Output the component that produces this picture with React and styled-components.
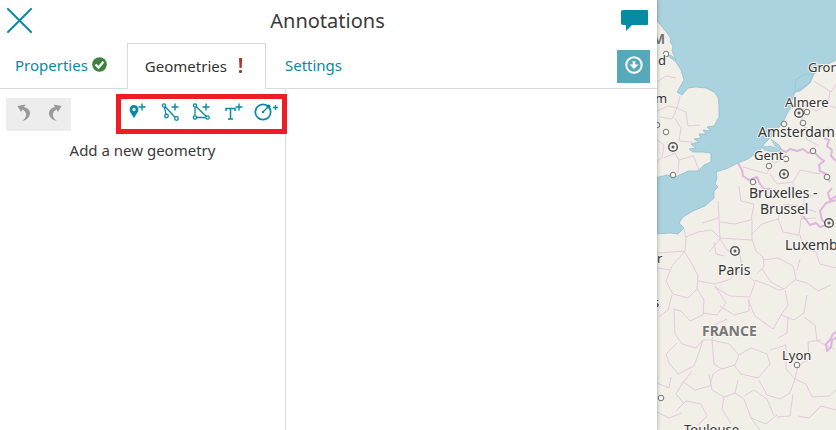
import React from "react";
import styled, { createGlobalStyle } from "styled-components";

const teal = "#078aa3";
const line = "#d9dadb";

const Global = createGlobalStyle`
  * { box-sizing: border-box; }
  body { margin: 0; background: #fff; color: #3a3a3a; font: 15px/24px "Noto Sans", sans-serif; overflow: hidden; }
  button { font: inherit; color: inherit; border: 0; padding: 0; margin: 0; background: transparent; cursor: pointer; }
  svg { display: block; }
`;
const Page = styled.div`
  display: flex;
  height: 100vh;
`;
const Panel = styled.main`
  display: flex;
  flex-direction: column;
  flex: none;
  width: 657px;
  max-width: 80%;
  background: #fff;
  box-shadow: 0 0 4px rgba(0, 0, 0, 0.35);
  z-index: 1;
`;
const Header = styled.header`
  display: grid;
  grid-template-columns: 36px 1fr 36px;
  align-items: center;
  height: 43px;
  padding: 0 4px 2px 2px;
`;
const HeaderButton = styled.button`
  display: grid;
  place-items: center;
  height: 40px;
`;
const Title = styled.h1`
  margin: 0;
  font-size: 20px;
  line-height: 28px;
  font-weight: 400;
  text-align: center;
`;
const TabBar = styled.div`
  display: flex;
  height: 46px;
`;
const Tab = styled.button`
  display: flex;
  align-items: center;
  gap: ${(p) => (p.$active ? 6 : 4)}px;
  padding: 0 19px 2px;
  color: ${(p) => (p.$active ? "#333" : teal)};
  border: solid ${line};
  border-width: ${(p) => (p.$active ? "1px 1px 0" : "0 0 1px")};
  ${(p) => p.$active && "padding: 0 17px 1px;"}
  ${(p) => p.$first && "padding-left: 15px; padding-right: 20px;"}
`;
const TabActions = styled.div`
  flex: 1;
  display: flex;
  justify-content: flex-end;
  padding: 7px 7px 0 0;
  border-bottom: 1px solid ${line};
`;
const DownloadButton = styled.button`
  display: grid;
  place-items: center;
  width: 33px;
  height: 33px;
  padding-bottom: 4px;
  background: #56a9ba;
`;
const Body = styled.div`
  display: flex;
  flex: 1;
`;
const GeometryList = styled.section`
  width: 286px;
  border-right: 1px solid ${line};
`;
const Toolbar = styled.div`
  display: flex;
  justify-content: space-between;
  align-items: flex-start;
  padding: 5px 0 0 6px;
  margin-right: -2px;
`;
const History = styled.div`
  display: flex;
  width: 65px;
  height: 33px;
  padding: 0 0 4px 2px;
  margin-top: 4px;
  background: #ededed;
`;
const ToolButton = styled.button`
  display: grid;
  place-items: center;
  flex: 1;
`;
const Tools = styled.div`
  display: flex;
  width: 171px;
  height: 40px;
  padding: 0 0 4px 2px;
  border: 5px solid #ee1c25;
  background: #fff;
  z-index: 1;
`;
const Hint = styled.p`
  margin: 4px 0 0;
  text-align: center;
`;
const MapArea = styled.aside`
  flex: 1;
  min-width: 0;
  overflow: hidden;
  background: #aad3df;
`;
const MapSvg = styled.svg`
  width: 100%;
  height: 100%;
`;
const Label = styled.text`
  font-family: "Noto Sans", sans-serif;
  font-size: ${(p) => p.$size || 14}px;
  font-weight: ${(p) => (p.$bold ? 700 : 400)};
  fill: ${(p) => (p.$bold ? "#777" : "#333")};
  stroke: #f8f6f2;
  stroke-width: 2px;
  stroke-linejoin: round;
  paint-order: stroke;
`;

const Stroke = ({ children, size = 20, w = 1.3, ...rest }) => (
  <svg width={size} height={size} viewBox={`0 0 ${size} ${size}`} fill="none" stroke={teal} strokeWidth={w} {...rest}>
    {children}
  </svg>
);
const Plus = ({ x = 14, y = 5, r = 3.5 }) => (
  <path strokeWidth="1.4" d={`M${x - r} ${y}H${x + r}M${x} ${y - r}V${y + r}`} />
);

const tools = [
  ["Add marker", <Stroke key="m"><path fill={teal} stroke="none" fillRule="evenodd" d="M5 3a4.4 4.4 0 0 0-4.400 4.400C.6 10.500 3.500 12.500 5 16.500C6.500 12.500 9.400 10.500 9.400 7.400A4.400 4.400 0 0 0 5 3ZM5 5.800a1.600 1.600 0 1 1 0 3.200A1.600 1.600 0 0 1 5 5.800Z" /><Plus x={13} /></Stroke>],
  ["Add line", <Stroke key="l" w={1.3}><circle cx="3" cy="3.500" r="1.600" /><circle cx="5.500" cy="14" r="1.800" /><circle cx="15.500" cy="16.500" r="1.800" /><path d="M3.400 5.200 5 12.200M4.300 4.700 14 15.200" /><Plus x={14} /></Stroke>],
  ["Add polygon", <Stroke key="p" w={1.3}><circle cx="3" cy="3.500" r="1.600" /><circle cx="3" cy="15.500" r="1.700" /><circle cx="15.500" cy="15.500" r="1.700" /><path d="M3 5.200V13.700M4.300 4.700 14.200 14.300M4.800 15.500H13.800" /><Plus x={14} /></Stroke>],
  ["Add text", <Stroke key="t"><path d="M2 9V6.500H11V9M6.500 6.500V17M4 17H9" strokeWidth="1.500" /><Plus x={15} /></Stroke>],
  ["Add circle", <Stroke key="c" size={26}><circle cx="10" cy="13" r="7.700" strokeWidth="1.700" /><circle cx="10" cy="13" r="1.200" fill={teal} stroke="none" /><path d="M10 13 15 8" /><circle cx="15.500" cy="7.500" r="2.100" fill={teal} stroke="none" /><Plus x={22.5} y={8.500} r={2.5} /></Stroke>],
];

const Turn = ({ flip }) => (
  <svg width="20" height="22" viewBox="0 0 20 22">
    <path transform={flip ? "translate(20 0) scale(-1 1)" : undefined} fill="#999" d="M3.500 4 11.500 2.500 10 5C16 6.500 18 11.500 14 16Q12 18.500 8 19C14 15 13 10 8.500 7.500L7 10Z" />
  </svg>
);

const dots = [[666, 54], [657, 125], [666, 132], [673, 175], [807, 112], [784, 124], [803, 123], [813, 151], [786, 159], [769, 166], [753, 182], [827, 177], [797, 365], [661, 398]];
const capitals = [[673, 147], [799, 113], [784, 174], [735, 251], [829, 223]];
const labels = [
  [652, 44, "M", 14, true], [658, 65, "d", 13], [655, 103, "m", 13],
  [808, 72, "Groningen", 13], [785, 107, "Almere", 13], [758, 137, "Amsterdam", 14],
  [754, 160, "Gent", 13], [749, 198, "Bruxelles -", 14], [760, 214, "Brussel", 14],
  [785, 250, "Luxembourg", 14], [718, 275, "Paris", 14], [702, 336, "FRANCE", 14, true],
  [782, 360, "Lyon", 13], [684, 434, "Toulouse", 13], [657, 263, "r", 13], [653, 307, "s", 13],
];

const EuropeMap = () => (
  <MapSvg viewBox="657 0 179 430" preserveAspectRatio="xMinYMin slice" role="img" aria-label="Map">
    <rect x="657" width="179" height="430" fill="#aad3df" />
    <g fill="#f2efe9" stroke="#8fbfce" strokeWidth="0.800">
      <path d="M655 20 659 23 663 28 668 34 671 39 670 42 673 46 672 51 676 60 672 56 667 55 676 62 681 70 684 80 680 87 677 92 682 95 688 88 696 87 706 88 714 92 718 97 719 106 719 117 714 126 707 127 711 131 703 130 706 134 699 134 701 138 694 139 699 142 691 144 696 148 689 149 693 152 703 152 711 153 711 162 704 165 700 169 697 171 688 171 682 174 675 177 667 175 655 178Z" />
      <path d="M840 58 824 66 814 74 810 83 800 91 795 92 792 100 791 107 788 112 783 122 777 130 771 137 765 143 760 150 748 159 738 163 728 168 716 172 717 178 715 184 718 187 714 191 714 198 705 206 693 211 683 217 679 223 684 228 680 232 678 234 670 233 655 234V435H840Z" />
    </g>
    <path fill="#aad3df" stroke="#8fbfce" strokeWidth="0.600" d="M810 82 802 88 795 91 796 80 803 75 813 74Z M762 147 770 146 776 148 780 151 773 152 764 150Z M771 139 779 145 782 150 775 146Z" />
    <g fill="none" stroke="#e3cbdc" strokeWidth="1" strokeLinejoin="round">
      <path d="M657 82 666 76 676 78 M657 111 668 106 677 108 680 96 M677 108 686 112 688 126 700 125 M677 108 672 119 660 117 M675 118 681 128 679 141 692 142 M657 140 664 145 662 158 657 161 M664 158 675 153 679 160 693 156 M679 160 678 173 M693 155 699 170" />
      <path d="M718 201 719 218 702 223 M719 218 720 239 709 252 M684 229 686 238 685 251 657 253 M686 237 698 232 712 230 719 237 M720 222 734 224 751 220 754 204 741 201 739 186 M752 219 752 240 719 238 M685 251 672 266 666 281 673 294 688 298 697 289 698 276 692 264 684 251 M698 281 715 284 728 280 742 269 740 254 728 251 720 239 M714 242 716 254 724 256 M657 268 670 270 M672 295 668 310 659 317 M697 289 704 300 703 315 690 321 681 311 673 309 M703 313 717 315 726 303 715 286 M715 287 730 296 750 297 755 282 742 270 M752 239 756 251 763 257 764 266 757 274 M751 235 762 224 778 219 783 232 799 235 801 219 816 218 M778 219 783 205 797 205 802 219 M763 260 778 258 793 266 796 279 784 289 771 282 762 269 M755 280 768 285 778 290 784 289 M796 280 807 283 818 291 831 285 M800 259 797 270 M800 235 804 249 816 252 820 264 836 268 M785 290 788 305 781 315 773 329 755 316 748 300 M749 299 749 311 734 315 720 306 M781 315 794 320 804 313 807 295 M788 317 787 333 778 338 M804 317 815 325 817 341 834 349" />
      <path d="M674 311 675 334 682 344 696 348 703 340 712 340 716 324 727 319 M703 340 698 355 694 366 678 374 669 363 666 354 677 343 M712 340 729 344 739 355 735 365 722 369 714 364 712 340 M739 355 751 348 767 354 770 364 758 378 741 374 734 365 M770 350 786 345 786 369 795 379 790 393 780 399 767 395 759 380 M722 368 713 374 710 386 695 390 683 382 676 394 684 404 M683 383 692 371 M709 374 712 390 724 397 735 393 738 380 M724 397 722 409 731 424 M735 393 744 399 751 418 760 430 M744 396 754 390 767 399 774 416 M751 418 766 424 777 415 M795 379 798 366 809 359 808 342 821 340 M795 379 806 384 812 397 829 396 836 390 M793 394 790 416 777 417 M798 416 809 418 821 406 836 410 M676 411 686 401 701 404 707 416 697 426 M657 383 669 388 671 377 M657 412 669 418 682 413" />
      <path d="M791 108 807 105 816 111 828 105 836 108 M804 108 801 125 813 131 829 128 M808 129 806 139 819 146 M760 154 775 163 787 154 M771 164 767 174 743 167 M770 174 777 184 793 182 800 170 820 174 M793 183 795 195 814 196 M804 194 804 208 816 212 M814 81 831 92 836 84 M830 91 828 105" />
    </g>
    <g fill="none" stroke="#d8a8dc" strokeWidth="2" strokeLinejoin="round" strokeOpacity="0.800">
      <path d="M738 163 742 170 743 176 749 180 757 177 760 184 764 189 772 189 M779 149 786 152 790 149 797 151 803 149 808 153 814 152 820 158 824 161 819 165 820 171 826 174 830 182 M824 138 829 140 827 146 832 150 831 156 836 161 M836 196 830 200 828 193 832 188 M803 216 810 225 816 223 820 227 827 225 M836 200 826 203 820 211 822 220 829 226 M838 331 833 334 830 340 826 344 827 351 831 347 832 340 837 337" />
    </g>
    <g fill="#f8f6f2" stroke="#777" strokeWidth="1">
      {dots.map(([x, y]) => <circle key={`${x}-${y}`} cx={x} cy={y} r="2.800" />)}
    </g>
    {capitals.map(([x, y]) => (
      <g key={`${x}-${y}`} fill="#f8f6f2" stroke="#555" strokeWidth="1.500">
        <circle cx={x} cy={y} r="4.300" />
        <circle cx={x} cy={y} r="1.100" fill="#555" strokeWidth="1" />
      </g>
    ))}
    {labels.map(([x, y, t, size, bold]) => (
      <Label key={t} x={x} y={y} $size={size} $bold={bold}>{t}</Label>
    ))}
  </MapSvg>
);

export default function App() {
  return (
    <>
      <Global />
      <Page>
        <Panel>
          <Header>
            <HeaderButton aria-label="Close">
              <Stroke size={26} w={2} strokeLinecap="round"><path d="M1 1 24 24M24 1 1 24" /></Stroke>
            </HeaderButton>
            <Title>Annotations</Title>
            <HeaderButton aria-label="Comments">
              <svg width="28" height="22" viewBox="0 0 28 22" fill={teal}>
                <path d="M2 0H26Q27 0 27 1V14Q27 15 26 15H11L5 21V15H2Q0 15 0 13V2Q0 0 2 0Z" />
              </svg>
            </HeaderButton>
          </Header>
          <TabBar role="tablist">
            <Tab role="tab" aria-selected="false" $first>
              Properties
              <svg width="15" height="15" viewBox="0 0 15 15"><circle cx="7.500" cy="7.500" r="7.300" fill="#3c823c" /><path d="M3.500 7.500 6.500 10.500 11.500 4.800" fill="none" stroke="#fff" strokeWidth="2.400" /></svg>
            </Tab>
            <Tab role="tab" aria-selected="true" $active>
              Geometries
              <svg width="15" height="16" viewBox="0 0 15 16" fill="#ab3a2d"><path d="M6 0H9.200L8.700 10H6.500Z" /><rect x="6" y="12" width="3" height="3" rx="1" /></svg>
            </Tab>
            <Tab role="tab" aria-selected="false">Settings</Tab>
            <TabActions>
              <DownloadButton aria-label="Download">
                <svg width="18" height="18" viewBox="0 0 18 18" fill="none" stroke="#fff" strokeWidth="2"><circle cx="9" cy="9" r="7.700" /><path fill="#fff" stroke="none" d="M7.700 5H10.300V8.500H13.500L9 13 4.500 8.500H7.700Z" /></svg>
              </DownloadButton>
            </TabActions>
          </TabBar>
          <Body>
            <GeometryList>
              <Toolbar>
                <History>
                  <ToolButton aria-label="Undo" disabled><Turn /></ToolButton>
                  <ToolButton aria-label="Redo" disabled><Turn flip /></ToolButton>
                </History>
                <Tools>
                  {tools.map(([name, icon]) => <ToolButton key={name} aria-label={name}>{icon}</ToolButton>)}
                </Tools>
              </Toolbar>
              <Hint>Add a new geometry</Hint>
            </GeometryList>
          </Body>
        </Panel>
        <MapArea><EuropeMap /></MapArea>
      </Page>
    </>
  );
}
